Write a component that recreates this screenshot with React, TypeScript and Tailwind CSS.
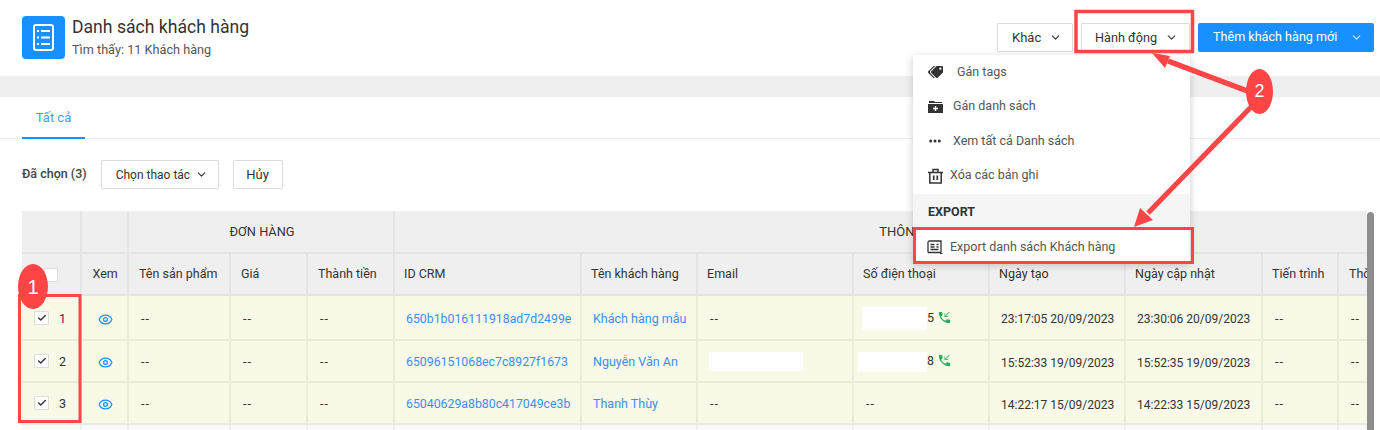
import { ChevronDown, Check, Eye } from "lucide-react";
import { FaTags } from "react-icons/fa";
import { MdPhoneCallback } from "react-icons/md";

const font = { fontFamily: "Roboto, sans-serif" };

function Btn({ label, cls = "", gap = "ml-[8px]", size = "text-[13px]" }: { label: string; cls?: string; gap?: string; size?: string }) {
  return (
    <button className={`h-[29px] flex items-center border border-[#ddd] bg-white text-[#333] rounded-[1px] ${size} ${cls}`}>
      <span>{label}</span>
      <ChevronDown className={`${gap} w-[13px] h-[13px] text-[#333]`} strokeWidth={2} />
    </button>
  );
}

function CheckBox() {
  return (
    <span className="inline-flex items-center justify-center w-[15px] h-[14px] mt-[-3px] bg-white border border-[#ddd] rounded-[1px] shrink-0">
      <Check className="w-[10px] h-[10px] text-[#333]" strokeWidth={3.2} />
    </span>
  );
}

function Dash() {
  return <span className="tracking-[1px] text-[#333]">--</span>;
}

const widths = [58.5, 47.5, 102, 77, 87, 187, 116, 156, 136, 136, 137, 76, 29];
const th = "border-r-2 border-b-2 border-[#e4e4e4] font-normal text-[12.5px] text-[#333] text-left pl-[10px] pt-[1px] whitespace-nowrap overflow-hidden";
const td = "border-r-2 border-b-2 border-[#ebebdc] text-[12.5px] text-[#333] pl-[12px] pt-[3px] whitespace-nowrap overflow-hidden";

type Row = { n: number; id: string; name: string; email?: boolean; phone?: string; phoneW: number; phoneH: string; phoneX: string; created: string; updated: string };
const rows: Row[] = [
  { n: 1, id: "650b1b016111918ad7d2499e", name: "Khách hàng mẫu", phone: "5", phoneW: 65, phoneH: "h-[23px]", phoneX: "ml-[-4px] mt-[-2px]", created: "23:17:05 20/09/2023", updated: "23:30:06 20/09/2023" },
  { n: 2, id: "65096151068ec7c8927f1673", name: "Nguyễn Văn An", email: true, phone: "8", phoneW: 69, phoneH: "h-[20px]", phoneX: "ml-[-8px] mt-[-2px]", created: "15:52:33 19/09/2023", updated: "15:52:35 19/09/2023" },
  { n: 3, id: "65040629a8b80c417049ce3b", name: "Thanh Thùy", phoneW: 0, phoneH: "", phoneX: "", created: "14:22:17 15/09/2023", updated: "14:22:33 15/09/2023" },
];
const rowHeights = ["h-[45px]", "h-[42px]", "h-[42px]"];

function MenuItem({ icon, label, gap }: { icon: React.ReactNode; label: string; gap: string }) {
  return (
    <div className="h-[34.5px] flex items-center pl-[14px] text-[12.5px] text-[#555]">
      <span className="w-[16px] flex justify-center text-[#333]">{icon}</span>
      <span className={gap}>{label}</span>
    </div>
  );
}

export default function App() {
  return (
    <div className="relative w-[1380px] h-[430px] overflow-hidden bg-white" style={font}>
      {/* page header */}
      <div className="h-[76px] flex justify-between pl-[22px] pr-[6px]">
        <div className="flex items-start pt-[16px]">
          <div className="w-[43px] h-[43px] bg-[#1890ff] rounded-[4px] flex items-center justify-center">
            <svg width="21" height="27" viewBox="0 0 21 27" fill="none" stroke="white">
              <rect x="1" y="1" width="19" height="25" rx="2" strokeWidth="2" />
              <path d="M8 7h9M8 13.500h9M8 20h9" strokeWidth="2" />
              <path d="M4 7h2M4 13.500h2M4 20h2" strokeWidth="2" />
            </svg>
          </div>
          <div className="ml-[7px]">
            <div className="text-[17.6px] leading-[22px] text-[#333]">Danh sách khách hàng</div>
            <div className="text-[12.7px] leading-[18px] mt-[3px] text-[#555]">Tìm thấy: 11 Khách hàng</div>
          </div>
        </div>
        <div className="flex gap-[8px] pt-[23px]">
          <Btn label="Khác" cls="w-[76px] pl-[14px]" />
          <Btn label="Hành động" cls="w-[109px] pl-[13px]" size="text-[12.7px]" />
          <button className="h-[29px] w-[176px] pl-[15px] flex items-center bg-[#1890ff] text-white text-[12.6px] rounded-[2px]">
            <span>Thêm khách hàng mới</span>
            <ChevronDown className="ml-[13px] w-[13px] h-[13px] text-[#cfe6ff]" />
          </button>
        </div>
      </div>
      <div className="h-[21px] bg-[#efefef]" />

      {/* card */}
      <div className="bg-white rounded-t-[4px] relative">
        <div className="h-[42px] pl-[22px] border-b border-[#eeeeee] flex">
          <div className="w-[63px] h-[42px] border-b-2 border-[#1890ff] text-[13px] text-[#3f9dfb] text-center leading-[41px]">Tất cả</div>
        </div>
        <div className="flex items-center pl-[22px] mt-[21px] h-[29px]">
          <span className="text-[12.5px] font-medium text-[#444]">Đã chọn (3)</span>
          <Btn label="Chọn thao tác" cls="w-[118px] ml-[14px] pl-[14px]" gap="ml-[5px]" size="text-[12px]" />
          <button className="ml-[14px] w-[50px] h-[29px] border border-[#ddd] rounded-[1px] text-[13px] text-[#333]">Hủy</button>
        </div>

        {/* table */}
        <div className="ml-[22px] mt-[22px] w-[1345px] overflow-hidden">
          <table className="table-fixed border-collapse w-[1345px]">
            <colgroup>
              {widths.map((w, i) => (
                <col key={i} style={{ width: w }} />
              ))}
            </colgroup>
            <thead>
              <tr className="h-[42px] bg-[#efefef]">
                <th className={th} />
                <th className={th} />
                <th colSpan={3} className={`${th} !text-center !pl-[2px] !text-[12.8px]`}>ĐƠN HÀNG</th>
                <th colSpan={8} className={`${th} !text-center !pl-[150px] !border-r-0 !text-[13px]`}>THÔNG TIN KHÁCH HÀNG</th>
              </tr>
              <tr className="h-[42px] bg-[#efefef]">
                <th className={`${th} !pl-[22px]`}>
                  <span className="flex"><span className="w-[14px] h-[14px] bg-white border border-[#ddd] rounded-[1px]" /></span>
                </th>
                <th className={`${th} !pl-[11px]`}>Xem</th>
                {["Tên sản phẩm", "Giá", "Thành tiền"].map((h) => (
                  <th key={h} className={th}>{h}</th>
                ))}
                {["ID CRM", "Tên khách hàng", "Email", "Số điện thoại", "Ngày tạo", "Ngày cập nhật", "Tiến trình"].map((h) => (
                  <th key={h} className={`${th} !pl-[9px]`}>{h}</th>
                ))}
                <th className={`${th} !border-r-0`}>Thời</th>
              </tr>
            </thead>
            <tbody>
              {rows.map((r, i) => (
                <tr key={r.n} className={`${rowHeights[i]} bg-[#f8f9e6]`}>
                  <td className={`${td} !pl-[12px]`}>
                    <span className="flex items-center">
                      <CheckBox />
                      <span className={`ml-[10px] ${r.n === 1 ? "text-[#4a2050]" : ""}`}>{r.n}</span>
                    </span>
                  </td>
                  <td className={`${td} !pl-[16px]`}>
                    <Eye className="w-[15px] h-[15px] text-[#1890ff]" strokeWidth={2} />
                  </td>
                  <td className={td}><Dash /></td>
                  <td className={td}><Dash /></td>
                  <td className={td}><Dash /></td>
                  <td className={`${td} !pl-[11px] !text-[12.3px] !text-[#3d8ef0]`}>{r.id}</td>
                  <td className={`${td} !pl-[11px] !text-[#3d8ef0]`}>{r.name}</td>
                  <td className={td}>
                    {r.email ? <span className="block w-[94px] h-[19px] bg-white ml-[-1px] mt-[-2px]" /> : <Dash />}
                  </td>
                  <td className={td}>
                    {r.phone ? (
                      <span className={`flex items-center ${r.phoneX}`}>
                        <span className={`bg-white ${r.phoneH}`} style={{ width: r.phoneW }} />
                        <span>{r.phone}</span>
                        <MdPhoneCallback className="ml-[3px] mt-[-2px] w-[15px] h-[15px] text-[#27ae60]" />
                      </span>
                    ) : <Dash />}
                  </td>
                  <td className={`${td} !pl-[11px] !text-[12px]`}>{r.created}</td>
                  <td className={`${td} !pl-[11px] !text-[12px]`}>{r.updated}</td>
                  <td className={td}><Dash /></td>
                  <td className={`${td} !border-r-0`}><Dash /></td>
                </tr>
              ))}
              <tr className="h-[20px] bg-[#fafafa]">
                {widths.map((_, i) => (
                  <td key={i} className="border-r-2 border-[#eeeeee]" />
                ))}
              </tr>
            </tbody>
          </table>
        </div>
      </div>

      {/* scrollbar */}
      <div className="absolute left-[1367px] top-[212px] w-[7px] h-[218px] bg-[#8e8e8e] rounded-t-[4px]" />

      {/* dropdown */}
      <div className="absolute left-[913px] top-[55px] w-[277px] h-[208px] bg-white shadow-[0_2px_8px_rgba(0,0,0,0.2)]">
        <div>
          <MenuItem icon={<FaTags className="w-[20px] h-[16px] -scale-x-100 ml-[1px]" />} label="Gán tags" gap="ml-[14px]" />
          <MenuItem
            icon={
              <svg width="15" height="12" viewBox="0 0 15 12" fill="currentColor">
                <path d="M1 0h5l1 1h7v1H1z" />
                <path fillRule="evenodd" d="M0 3h15v9H0zM6.800 5v1.700H5v1.600h1.800V10h1.400V8.300H10V6.700H8.200V5z" />
              </svg>
            }
            label="Gán danh sách"
            gap="ml-[10px]"
          />
          <MenuItem
            icon={
              <svg width="12" height="4" viewBox="0 0 12 4" fill="currentColor">
                <circle cx="1.700" cy="2" r="1.500" /><circle cx="6" cy="2" r="1.500" /><circle cx="10.300" cy="2" r="1.500" />
              </svg>
            }
            label="Xem tất cả Danh sách"
            gap="ml-[10px]"
          />
          <MenuItem
            icon={
              <svg width="15" height="16" viewBox="0 0 15 16" fill="none" stroke="currentColor" strokeWidth="1.500">
                <path d="M0 4.500h15M5 4.500V1.500h5v3M1.800 4.500V15h11.400V4.500" />
                <path d="M5.700 7.500v4.500M9.300 7.500v4.500" strokeWidth="1.700" />
              </svg>
            }
            label="Xóa các bản ghi"
            gap="ml-[7px]"
          />
        </div>
        <div className="h-[35px] bg-[#f5f5f5] flex items-center pl-[15px] pt-[2px] text-[12.5px] font-bold text-[#333] mt-[1px]">EXPORT</div>
        <div className="pt-[1px]">
          <MenuItem
            icon={
              <svg width="16" height="14" viewBox="0 0 16 14" fill="none" stroke="currentColor" strokeWidth="1.300">
                <path d="M1 12.500V2.500Q1 1 2.500 1H14v11.500M1 12.500H14" />
                <path d="M3.500 4.500h4M3.500 7h4M3.500 9.500h8M9.500 4.500h2M9.500 7h2" />
                <path d="M13 13.500h2.500" />
              </svg>
            }
            label="Export danh sách Khách hàng"
            gap="ml-[7px]"
          />
        </div>
      </div>

      {/* annotations */}
      <svg className="absolute inset-0 pointer-events-none" width="1380" height="430" fill="none">
        <rect x="1076" y="11.500" width="116.500" height="40" stroke="#ff4545" strokeWidth="3.500" />
        <rect x="914.500" y="228.500" width="278" height="34" stroke="#ff4545" strokeWidth="3" />
        <rect x="19.500" y="295.500" width="60.500" height="126" stroke="#ff4545" strokeWidth="3" />
        <path d="M1168 61L1250 92" stroke="#ff4545" strokeWidth="5.500" />
        <path d="M1152 53L1170 56L1165 68Z" fill="#ff4545" />
        <path d="M1148 213L1253 105" stroke="#ff4545" strokeWidth="5" />
        <path d="M1134 227L1140 208L1153 220Z" fill="#ff4545" />
        <ellipse cx="1259.500" cy="91.500" rx="13.500" ry="22.500" fill="#ff4545" />
        <ellipse cx="33" cy="286.500" rx="15" ry="22.500" fill="#ff4545" />
      </svg>
      <div className="absolute left-[1246px] top-[69px] w-[27px] h-[45px] flex items-center justify-center text-white text-[18px]" style={{ fontFamily: "'Liberation Sans', sans-serif" }}>2</div>
      <div className="absolute left-[18px] top-[264px] w-[30px] h-[45px] flex items-center justify-center text-white text-[20px]" style={{ fontFamily: "'Liberation Sans', sans-serif" }}>1</div>
    </div>
  );
}
